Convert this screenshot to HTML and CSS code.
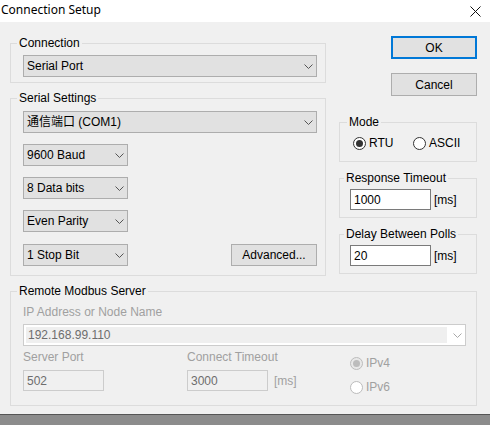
FILE: index.html
```html
<!DOCTYPE html>
<html>
<head>
<meta charset="utf-8">
<link rel="stylesheet" href="styles.css">
</head>
<body>
<div class="window">
  <div class="titlebar">
    <span class="title">Connection Setup</span>
    <svg class="close" width="11" height="11" viewBox="0 0 11 11"><path d="M0.5 0.5 L10.5 10.5 M10.5 0.5 L0.5 10.5" stroke="#111" stroke-width="1" fill="none"/></svg>
  </div>
  <div class="client">
    <div class="top">
      <div class="left">
        <fieldset class="group g-conn">
          <legend>Connection</legend>
          <div class="combo full"><span>Serial Port</span><svg class="chev" width="9" height="5" viewBox="0 0 9 5"><polyline points="0.5,0.5 4.5,4.5 8.5,0.5" fill="none" stroke="#555"/></svg></div>
        </fieldset>
        <fieldset class="group g-serial">
          <legend>Serial Settings</legend>
          <div class="stack">
            <div class="combo full"><span class="cjk">通信端口 (COM1)</span><svg class="chev" width="9" height="5" viewBox="0 0 9 5"><polyline points="0.5,0.5 4.5,4.5 8.5,0.5" fill="none" stroke="#555"/></svg></div>
            <div class="combo small"><span>9600 Baud</span><svg class="chev" width="9" height="5" viewBox="0 0 9 5"><polyline points="0.5,0.5 4.5,4.5 8.5,0.5" fill="none" stroke="#555"/></svg></div>
            <div class="combo small"><span>8 Data bits</span><svg class="chev" width="9" height="5" viewBox="0 0 9 5"><polyline points="0.5,0.5 4.5,4.5 8.5,0.5" fill="none" stroke="#555"/></svg></div>
            <div class="combo small"><span>Even Parity</span><svg class="chev" width="9" height="5" viewBox="0 0 9 5"><polyline points="0.5,0.5 4.5,4.5 8.5,0.5" fill="none" stroke="#555"/></svg></div>
            <div class="lastrow">
              <div class="combo small"><span>1 Stop Bit</span><svg class="chev" width="9" height="5" viewBox="0 0 9 5"><polyline points="0.5,0.5 4.5,4.5 8.5,0.5" fill="none" stroke="#555"/></svg></div>
              <div class="btn adv">Advanced...</div>
            </div>
          </div>
        </fieldset>
      </div>
      <div class="right">
        <div class="btn ok">OK</div>
        <div class="btn cancel">Cancel</div>
        <fieldset class="group g-mode">
          <legend>Mode</legend>
          <div class="radios">
            <div class="radio r-rtu"><span class="circle checked"></span><span>RTU</span></div>
            <div class="radio"><span class="circle"></span><span>ASCII</span></div>
          </div>
        </fieldset>
        <fieldset class="group g-time">
          <legend>Response Timeout</legend>
          <div class="inrow"><div class="input">1000</div><span class="unit">[ms]</span></div>
        </fieldset>
        <fieldset class="group g-time">
          <legend>Delay Between Polls</legend>
          <div class="inrow"><div class="input">20</div><span class="unit">[ms]</span></div>
        </fieldset>
      </div>
    </div>
    <fieldset class="group g-remote">
      <legend>Remote Modbus Server</legend>
      <div class="dlabel">IP Address or Node Name</div>
      <div class="combo dis"><span class="field">192.168.99.110</span><svg class="chev" width="9" height="5" viewBox="0 0 9 5"><polyline points="0.5,0.5 4.5,4.5 8.5,0.5" fill="none" stroke="#a8a8a8"/></svg></div>
      <div class="bottomgrid">
        <div class="col">
          <div class="dlabel">Server Port</div>
          <div class="input dis">502</div>
        </div>
        <div class="col">
          <div class="dlabel">Connect Timeout</div>
          <div class="inrow"><div class="input dis">3000</div><span class="unit dunit">[ms]</span></div>
        </div>
        <div class="col radcol">
          <div class="radio dradio"><span class="circle dchecked"></span><span>IPv4</span></div>
          <div class="radio dradio"><span class="circle dempty"></span><span>IPv6</span></div>
        </div>
      </div>
    </fieldset>
  </div>
  <div class="shadow"></div>
</div>
</body>
</html>
```

FILE: styles.css
```css
* { box-sizing: border-box; }

body {
  margin: 0;
  width: 490px;
  height: 425px;
  overflow: hidden;
  background: #f0f0f0;
  font-family: "Liberation Sans", Arial, sans-serif;
  font-size: 12px;
  color: #000;
}

.window {
  display: flex;
  flex-direction: column;
  height: 425px;
}

.titlebar {
  height: 22px;
  flex: none;
  background: #fff;
  display: flex;
  align-items: center;
  justify-content: space-between;
  padding: 0 9px 0 1px;
}

.title {
  font-family: "Noto Sans", "Liberation Sans", sans-serif;
  font-size: 12px;
  line-height: 16px;
  margin-top: -2px;
}

.close { display: block; }

.client {
  flex: none;
  height: 392px;
  padding: 14px 13px 0 10px;
}

.shadow {
  flex: 1;
  border-top: 1px solid #555;
  background: #8c8c8c;
}

.top {
  display: flex;
  gap: 13px;
  align-items: flex-start;
}

.left {
  width: 316px;
  display: flex;
  flex-direction: column;
  gap: 8px;
}

.right {
  width: 138px;
  display: flex;
  flex-direction: column;
}

.group {
  margin: 0;
  min-width: 0;
  border: 1px solid #dcdcdc;
}

.group legend {
  padding: 0 2px;
  margin-left: -6px;
  line-height: 14px;
}

.g-conn { padding: 5px 8px 5px 12px; }
.g-serial { padding: 6px 8px 9px 12px; }

.stack {
  display: flex;
  flex-direction: column;
  gap: 11px;
}

.lastrow {
  margin-top: 1px;
  display: flex;
  justify-content: space-between;
}

.combo {
  height: 22px;
  display: flex;
  align-items: center;
  justify-content: space-between;
  background: #e1e1e1;
  border: 1px solid #adadad;
  padding: 0 3px 0 3px;
  line-height: 14px;
}

.combo .chev { flex: none; }

.combo.full { width: 294px; }
.combo.small { width: 105px; }

.cjk { font-family: "Liberation Sans", "Noto Sans CJK SC", sans-serif; }

.btn {
  height: 23px;
  width: 86px;
  display: flex;
  align-items: center;
  justify-content: center;
  background: #e1e1e1;
  border: 1px solid #adadad;
}

.btn.ok {
  align-self: flex-end;
  border: 2px solid #0078d7;
}

.btn.cancel {
  align-self: flex-end;
  margin-top: 14px;
}

.btn.adv { height: 22px; }

.g-mode {
  margin-top: 19px;
  padding: 6px 8px 10px 13px;
}

.radios {
  display: flex;
  height: 16px;
}

.radio {
  display: flex;
  align-items: center;
  gap: 3px;
  height: 16px;
}

.r-rtu { width: 60px; }

.circle {
  width: 13px;
  height: 13px;
  border: 1px solid #333;
  border-radius: 50%;
  background: #fff;
  display: flex;
  align-items: center;
  justify-content: center;
}

.circle.checked::after {
  content: "";
  width: 7px;
  height: 7px;
  border-radius: 50%;
  background: #333;
}

.g-time {
  margin-top: 9px;
  padding: 4px 8px 7px 10px;
}

.inrow {
  display: flex;
  align-items: center;
  gap: 3px;
}

.input {
  width: 81px;
  height: 21px;
  border: 1px solid #7a7a7a;
  background: #fff;
  padding-left: 3px;
  display: flex;
  align-items: center;
}

.g-remote {
  margin-top: 8px;
  padding: 7px 10px 10px 12px;
}

.dlabel {
  color: #a0a0a0;
  line-height: 14px;
}

.combo.dis {
  margin-top: 5px;
  width: 443px;
  background: #fff;
  border-color: #cccccc;
  padding: 2px 3px 2px 2px;
  color: #6d6d6d;
}

.combo.dis .field {
  flex: 1;
  height: 100%;
  background: #efefef;
  padding-left: 2px;
  margin-right: 6px;
  display: flex;
  align-items: center;
}

.bottomgrid {
  margin-top: 4px;
  display: grid;
  grid-template-columns: 164px 163px 1fr;
}

.col .input { margin-top: 6px; }

.input.dis {
  border-color: #cccccc;
  background: #f0f0f0;
  color: #6d6d6d;
}

.unit.dunit {
  color: #a0a0a0;
  margin-top: 6px;
  margin-left: 3px;
}

.radcol {
  padding-top: 5px;
  display: flex;
  flex-direction: column;
  gap: 8px;
}

.dradio { color: #a0a0a0; }

.circle.dchecked {
  border-color: #bcbcbc;
  background: #e8e8e8;
}

.circle.dchecked::after {
  content: "";
  width: 7px;
  height: 7px;
  border-radius: 50%;
  background: #bcbcbc;
}

.circle.dempty {
  border-color: #bcbcbc;
  background: #fff;
}
```
